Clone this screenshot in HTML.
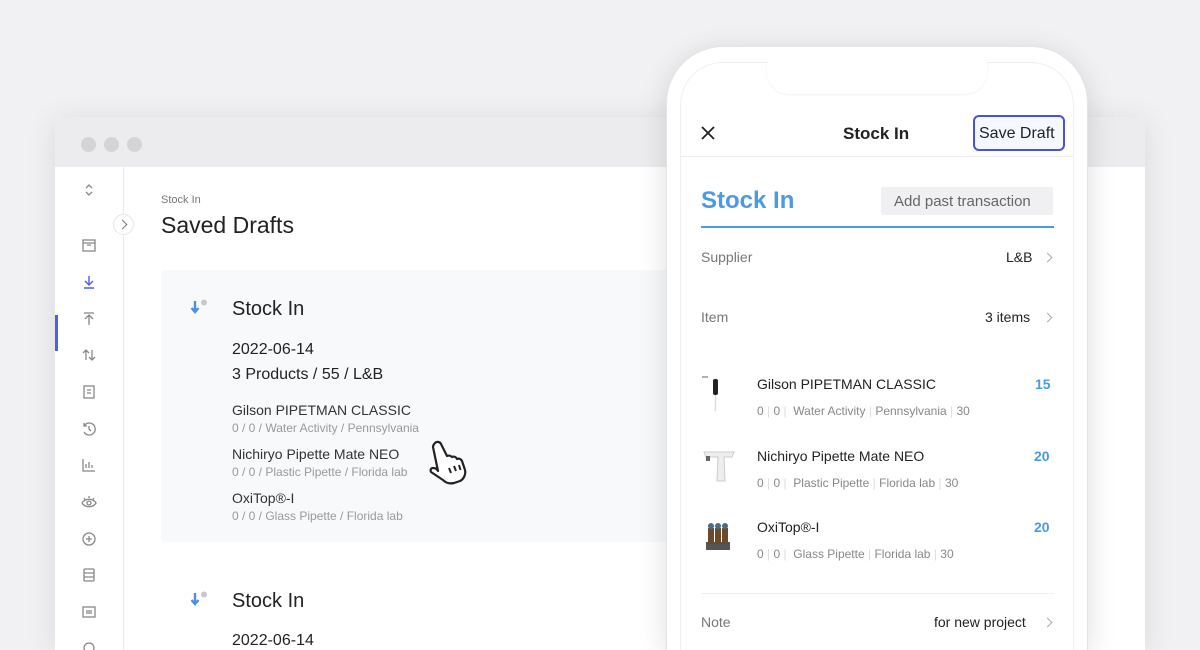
<!DOCTYPE html>
<html><head><meta charset="utf-8"><style>
*{margin:0;padding:0;box-sizing:border-box}
html,body{width:1200px;height:650px;overflow:hidden}
body{background:#f1f1f3;font-family:"Liberation Sans",sans-serif;position:relative;color:#222}
.win{position:absolute;left:55px;top:117px;width:1090px;height:533px;background:#fff;border-radius:8px 8px 0 0;box-shadow:0 4px 30px rgba(0,0,0,.10);overflow:hidden}
.tb{height:50px;background:#ececee}
.dot{position:absolute;top:20px;width:15px;height:15px;border-radius:50%;background:#d4d4d6}
.side{position:absolute;left:0;top:50px;width:69px;bottom:0;border-right:1px solid #eaeaec}
.ic{position:absolute;left:26px;width:16px;height:16px}
.act{position:absolute;left:0;top:148px;width:3px;height:36px;background:#4d5fe8}
.abs{position:absolute}
.phone{position:absolute;left:667px;top:47px;width:420px;height:603px;border-radius:56px 56px 0 0;background:#fff;box-shadow:0 0 0 1px #e4e4e6,0 6px 30px rgba(0,0,0,.14)}
.scr{position:absolute;left:681px;top:63px;width:392px;height:587px;border-radius:42px 42px 0 0;background:#fff;box-shadow:0 0 0 1px #f0f0f0}
.notch{position:absolute;left:767px;top:60px;width:220px;height:34px;background:#fff;border-radius:0 0 22px 22px;box-shadow:0 1px 2px rgba(0,0,0,.06)}
.t{position:absolute;white-space:nowrap}
.chev{position:absolute;width:7px;height:7px;border-top:1.5px solid #aaa;border-right:1.5px solid #aaa;transform:rotate(45deg)}
</style></head><body>
<div class="win">
 <div class="tb"></div>
 <div class="dot" style="left:26px"></div><div class="dot" style="left:49px"></div><div class="dot" style="left:72px"></div>
 <div class="side">
  <div class="act"></div>
  <svg class="ic" style="top:15px" viewBox="0 0 16 16" fill="none" stroke="#888" stroke-width="1.3"><path d="M5 6l3-3 3 3M5 10l3 3 3-3"/></svg>
  <svg class="ic" style="top:70px" viewBox="0 0 16 16" fill="none" stroke="#888" stroke-width="1.3"><rect x="2" y="3" width="12" height="11"/><path d="M2 6h12M6 8h4"/></svg>
  <svg class="ic" style="top:107px" viewBox="0 0 16 16" fill="none" stroke="#4d5fe8" stroke-width="1.4"><path d="M8 2v9M4 7l4 4 4-4M3 14h10"/></svg>
  <svg class="ic" style="top:144px" viewBox="0 0 16 16" fill="none" stroke="#888" stroke-width="1.3"><path d="M8 14V5M4 8l4-4 4 4M3 2h10"/></svg>
  <svg class="ic" style="top:180px" viewBox="0 0 16 16" fill="none" stroke="#888" stroke-width="1.3"><path d="M5 13V3M2 6l3-3 3 3M11 3v10M8 10l3 3 3-3"/></svg>
  <svg class="ic" style="top:217px" viewBox="0 0 16 16" fill="none" stroke="#888" stroke-width="1.3"><rect x="3" y="2" width="10" height="12"/><path d="M6 6h4M6 9h4"/></svg>
  <svg class="ic" style="top:254px" viewBox="0 0 16 16" fill="none" stroke="#888" stroke-width="1.3"><path d="M3 5a6 6 0 1 1 0 6M3 2v3h3M8 5v3l2 2"/></svg>
  <svg class="ic" style="top:290px" viewBox="0 0 16 16" fill="none" stroke="#888" stroke-width="1.3"><path d="M2 2v12h12M5 11V7M8 11V5M11 11V8"/></svg>
  <svg class="ic" style="top:327px" viewBox="0 0 16 16" fill="none" stroke="#888" stroke-width="1.3"><path d="M1 9c3-5 11-5 14 0c-3 5-11 5-14 0"/><circle cx="8" cy="9" r="2"/><path d="M8 2v2M3 4l1 1.5M13 4l-1 1.5"/></svg>
  <svg class="ic" style="top:364px" viewBox="0 0 16 16" fill="none" stroke="#888" stroke-width="1.3"><circle cx="8" cy="8" r="6"/><path d="M8 5v6M5 8h6"/></svg>
  <svg class="ic" style="top:400px" viewBox="0 0 16 16" fill="none" stroke="#888" stroke-width="1.3"><rect x="3" y="2" width="10" height="12" rx="1"/><path d="M3 6h10M3 10h10"/></svg>
  <svg class="ic" style="top:437px" viewBox="0 0 16 16" fill="none" stroke="#888" stroke-width="1.3"><rect x="2" y="3" width="12" height="10"/><path d="M6 6v4M8 6v4M10 6v4"/></svg>
  <svg class="ic" style="top:473px" viewBox="0 0 16 16" fill="none" stroke="#888" stroke-width="1.3"><circle cx="8" cy="8" r="5"/></svg>
 </div>
 <div class="abs" style="left:58px;top:97px;width:21px;height:21px;border-radius:50%;background:#fff;border:1px solid #e6e6e8"></div>
 <div class="chev" style="left:64px;top:104px;border-color:#777"></div>
 <div class="t" style="left:106px;top:77px;font-size:11px;color:#777">Stock In</div>
 <div class="t" style="left:106px;top:95px;font-size:23px;color:#222">Saved Drafts</div>
 <div class="abs" style="left:106px;top:153px;width:520px;height:272px;background:#f8f9fb;border-radius:4px"></div>
 <svg class="abs" style="left:135px;top:182px" width="20" height="20" viewBox="0 0 20 20"><path d="M5 2v10M1.5 9l3.5 4 3.5-4" fill="none" stroke="#4a90e2" stroke-width="2.4"/><circle cx="14" cy="3.5" r="3" fill="#c8c8cc"/></svg>
 <div class="t" style="left:177px;top:181px;font-size:20px">Stock In</div>
 <div class="t" style="left:177px;top:224px;font-size:16px">2022-06-14</div>
 <div class="t" style="left:177px;top:249px;font-size:16px">3 Products / 55 / L&amp;B</div>
 <div class="t" style="left:177px;top:285px;font-size:14px;color:#333">Gilson PIPETMAN CLASSIC</div>
 <div class="t" style="left:177px;top:304px;font-size:12px;color:#999">0 / 0 / Water Activity / Pennsylvania</div>
 <div class="t" style="left:177px;top:329px;font-size:14px;color:#333">Nichiryo Pipette Mate NEO</div>
 <div class="t" style="left:177px;top:348px;font-size:12px;color:#999">0 / 0 / Plastic Pipette / Florida lab</div>
 <div class="t" style="left:177px;top:373px;font-size:14px;color:#333">OxiTop®-I</div>
 <div class="t" style="left:177px;top:392px;font-size:12px;color:#999">0 / 0 / Glass Pipette / Florida lab</div>
 <svg class="abs" style="left:372px;top:322px" width="42" height="46" viewBox="0 0 42 46"><path d="M8 4c2-2 5-1 6 1l6 12c2-1 4 0 5 1c2-1 4 0 5 2c2-1 4 0 5 2l3 9c1 4-1 9-5 11l-6 2c-4 1-8 0-11-3L4 33c-1-2 0-4 2-4c2 0 4 1 5 3L6 8c0-2 1-3 2-4z" fill="#fff" stroke="#222" stroke-width="2.2" stroke-linejoin="round"/><path d="M22 29l2 5M27 27l2 5M32 26l1.5 5" stroke="#222" stroke-width="2"/></svg>
 <svg class="abs" style="left:135px;top:474px" width="20" height="20" viewBox="0 0 20 20"><path d="M5 2v10M1.5 9l3.5 4 3.5-4" fill="none" stroke="#4a90e2" stroke-width="2.4"/><circle cx="14" cy="3.5" r="3" fill="#c8c8cc"/></svg>
 <div class="t" style="left:177px;top:473px;font-size:20px">Stock In</div>
 <div class="t" style="left:177px;top:515px;font-size:16px">2022-06-14</div>
</div>
<div class="phone"></div>
<div class="scr"></div>
<div class="notch"></div>
<svg class="abs" style="left:701px;top:126px" width="14" height="14" viewBox="0 0 14 14"><path d="M1 1l12 12M13 1L1 13" stroke="#222" stroke-width="1.8"/></svg>
<div class="t" style="left:843px;top:124px;font-size:17px;font-weight:bold;color:#222">Stock In</div>
<div class="abs" style="left:973px;top:115px;width:92px;height:36px;border:2px solid #4a52d9;border-radius:6px;background:#f6f8ff"></div>
<div class="t" style="left:979px;top:125px;font-size:16px;color:#222">Save Draft</div>
<div class="abs" style="left:681px;top:156px;width:392px;height:1px;background:#eee"></div>
<div class="t" style="left:701px;top:187px;font-size:24px;font-weight:bold;color:#4a9ae6">Stock In</div>
<div class="abs" style="left:881px;top:187px;width:172px;height:28px;background:#f0f0f2;border-radius:2px"></div>
<div class="t" style="left:894px;top:193px;font-size:15px;color:#666">Add past transaction</div>
<div class="abs" style="left:701px;top:226px;width:353px;height:2px;background:#4a9ae6"></div>
<div class="t" style="left:701px;top:249px;font-size:14px;color:#777">Supplier</div>
<div class="t" style="left:1006px;top:249px;font-size:14px;color:#222">L&amp;B</div>
<div class="chev" style="left:1044px;top:254px"></div>
<div class="t" style="left:701px;top:309px;font-size:14px;color:#777">Item</div>
<div class="t" style="left:985px;top:309px;font-size:14px;color:#222">3 items</div>
<div class="chev" style="left:1044px;top:314px"></div>
<svg class="abs" style="left:700px;top:375px" width="26" height="40" viewBox="0 0 26 40"><path d="M2 2h6" stroke="#666" stroke-width="1"/><rect x="13" y="4" width="5" height="16" rx="2" fill="#222"/><path d="M15.5 20v16" stroke="#ddd" stroke-width="1.5"/></svg>
<svg class="abs" style="left:700px;top:448px" width="36" height="36" viewBox="0 0 36 36"><path d="M4 4h30l-2 5h-8l1 24h-8L18 9H6z" fill="#eee" stroke="#ccc"/><rect x="6" y="8" width="4" height="5" fill="#666"/></svg>
<svg class="abs" style="left:704px;top:520px" width="28" height="32" viewBox="0 0 28 32"><rect x="2" y="22" width="24" height="8" fill="#555"/><rect x="4" y="8" width="6" height="16" fill="#6b4a2a"/><rect x="11" y="8" width="6" height="16" fill="#6b4a2a"/><rect x="18" y="8" width="6" height="16" fill="#6b4a2a"/><circle cx="7" cy="6" r="3" fill="#4a6b8a"/><circle cx="14" cy="6" r="3" fill="#4a6b8a"/><circle cx="21" cy="6" r="3" fill="#4a6b8a"/></svg>
<div class="t" style="left:757px;top:376px;font-size:14px;color:#222">Gilson PIPETMAN CLASSIC</div>
<div class="t" style="left:757px;top:404px;font-size:12px;color:#888">0 <span style="color:#ddd">|</span> 0 <span style="color:#ddd">|</span>&nbsp; Water Activity <span style="color:#ddd">|</span> Pennsylvania <span style="color:#ddd">|</span> 30</div>
<div class="t" style="left:1035px;top:376px;font-size:14px;font-weight:bold;color:#4a9ae6">15</div>
<div class="t" style="left:757px;top:448px;font-size:14px;color:#222">Nichiryo Pipette Mate NEO</div>
<div class="t" style="left:757px;top:476px;font-size:12px;color:#888">0 <span style="color:#ddd">|</span> 0 <span style="color:#ddd">|</span>&nbsp; Plastic Pipette <span style="color:#ddd">|</span> Florida lab <span style="color:#ddd">|</span> 30</div>
<div class="t" style="left:1034px;top:448px;font-size:14px;font-weight:bold;color:#4a9ae6">20</div>
<div class="t" style="left:757px;top:519px;font-size:14px;color:#222">OxiTop®-I</div>
<div class="t" style="left:757px;top:547px;font-size:12px;color:#888">0 <span style="color:#ddd">|</span> 0 <span style="color:#ddd">|</span>&nbsp; Glass Pipette <span style="color:#ddd">|</span> Florida lab <span style="color:#ddd">|</span> 30</div>
<div class="t" style="left:1034px;top:519px;font-size:14px;font-weight:bold;color:#4a9ae6">20</div>
<div class="abs" style="left:701px;top:593px;width:353px;height:1px;background:#f0f0f0"></div>
<div class="t" style="left:701px;top:614px;font-size:14px;color:#777">Note</div>
<div class="t" style="left:934px;top:614px;font-size:14px;color:#222">for new project</div>
<div class="chev" style="left:1044px;top:619px"></div>
</body></html>
